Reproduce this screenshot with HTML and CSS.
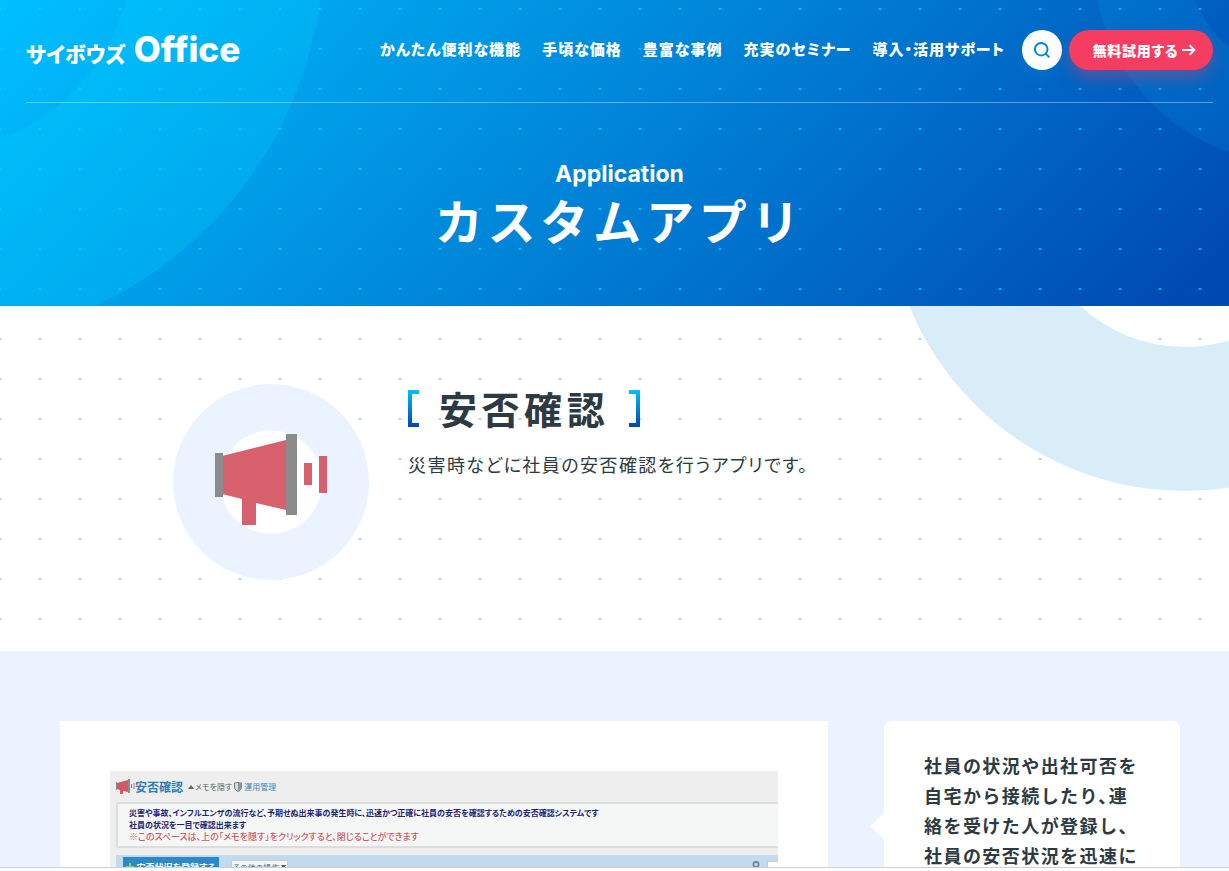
FILE: index.html
```html
<!DOCTYPE html>
<html lang="ja">
<head>
<meta charset="utf-8">
<meta name="viewport" content="width=device-width, initial-scale=1">
<title>安否確認 | カスタムアプリ | サイボウズ Office</title>
<link rel="stylesheet" href="styles.css">
</head>
<body>
<div class="page">
  <div class="hero">
    <header class="header">
      <a class="logo" href="#"><span class="logo-kana">サイボウズ</span><span class="logo-latin">Office</span></a>
      <nav class="nav">
        <a href="#">かんたん便利な機能</a>
        <a href="#">手頃な価格</a>
        <a href="#">豊富な事例</a>
        <a href="#">充実のセミナー</a>
        <a href="#">導入・活用サポート</a>
      </nav>
      <div class="actions">
        <button class="search" type="button" aria-label="検索">
          <svg width="18" height="18" viewBox="0 0 18 18" fill="none" stroke="#008ad8" stroke-width="2"><circle cx="8.2" cy="8.2" r="6.3"/><path d="M12.6 12.6 16.4 16.4"/></svg>
        </button>
        <a class="trial" href="#">無料試用する
          <svg width="14" height="12" viewBox="0 0 14 12" fill="none" stroke="#fff" stroke-width="2"><path d="M0 6H12M7.5 1.2 12.4 6 7.5 10.8"/></svg>
        </a>
      </div>
    </header>
    <div class="hero-title">
      <p class="hero-sub">Application</p>
      <h1>カスタムアプリ</h1>
    </div>
  </div>

  <main>
    <section class="intro">
      <div class="intro-icon">
        <svg width="112" height="92" viewBox="0 0 112 92">
          <path fill="#d6606c" d="M7 22 71 6V76L41 69V91H27V65L7 60Z"/>
          <path fill="#8a8c8b" d="M0 19H8V63H0ZM71 0H82V81H71Z"/>
          <path fill="#d6606c" d="M89 29H97V51H89ZM104 22H112V59H104Z"/>
        </svg>
      </div>
      <div class="intro-text">
        <h2>安否確認</h2>
        <p>災害時などに社員の安否確認を行うアプリです。</p>
      </div>
    </section>

    <section class="detail">
      <div class="shot-card">
        <div class="shot">
          <div class="shot-head">
            <svg width="19" height="16" viewBox="0 0 19 16"><path fill="#cf5964" d="M1 4 12 1V13L7 12V15H4V11L1 10Z"/><path fill="#8a8c8b" d="M0 3H1V11H0ZM12 0H14V14H12Z"/><path stroke="#d6606c" d="M15.5 5V9M18 4V10"/></svg>
            <strong>安否確認</strong>
            <svg class="tri" width="6" height="4" viewBox="0 0 6 4"><path fill="#666" d="M3 0 6 4H0Z"/></svg>
            <span>メモを隠す</span>
            <svg class="shield" width="8" height="10" viewBox="0 0 8 10"><path fill="#d5dade" stroke="#77808a" d="M.5 1 4 .5 7.5 1V5C7.5 8 5 9 4 9.5 3 9 .5 8 .5 5Z"/><path fill="#8b949c" d="M4 1 7 1.5V5C7 7 5 8.5 4 9Z"/></svg>
            <a href="#">運用管理</a>
          </div>
          <div class="memo">
            <p>災害や事故、インフルエンザの流行など、予期せぬ出来事の発生時に、迅速かつ正確に社員の安否を確認するための安否確認システムです</p>
            <p>社員の状況を一目で確認出来ます</p>
            <p class="memo-red">※このスペースは、上の「メモを隠す」をクリックすると、閉じることができます</p>
          </div>
          <div class="bar">
            <button class="register" type="button"><svg width="8" height="8" viewBox="0 0 8 8"><path stroke="#8bd45a" stroke-width="2" d="M4 0V8M0 4H8"/></svg>安否状況を登録する</button>
            <button class="other" type="button">その他の操作<svg width="5" height="4" viewBox="0 0 5 4"><path fill="#555" d="M0 0H5L2.5 4Z"/></svg></button>
            <svg class="lens" width="8" height="9" viewBox="0 0 8 9" fill="none" stroke="#68839a" stroke-width="1.6"><circle cx="4" cy="3.5" r="2.6"/><path d="M5 6 7 9"/></svg>
            <input class="find" type="text" aria-label="検索語">
          </div>
        </div>
      </div>
      <div class="bubble">
        <p>社員の状況や出社可否を<br>自宅から接続したり、連<br>絡を受けた人が登録し、<br>社員の安否状況を迅速に<br>確認できます。</p>
      </div>
    </section>
  </main>
</div>
<div class="bottom-bar"></div>
</body>
</html>
```
FILE: styles.css
```css
*, *::before, *::after { box-sizing: border-box; }

body {
  margin: 0;
  height: 100vh;
  display: flex;
  flex-direction: column;
  overflow: hidden;
  color: #2e3a42;
  background: #fff;
  font-family: "Noto Sans CJK JP", sans-serif;
}

h1, h2, p { margin: 0; }
a { color: inherit; text-decoration: none; }
button { font: inherit; border: 0; padding: 0; cursor: pointer; }
svg { display: block; flex: none; }

.page {
  flex: 1;
  min-height: 0;
  overflow-y: auto;
  scrollbar-width: none;
}

.bottom-bar {
  flex: none;
  height: 4px;
  border-top: 1px solid #ccd0d4;
  background: #fff;
}

/* Hero */
.hero {
  position: relative;
  isolation: isolate;
  overflow: hidden;
  padding: 0 16px 58px 26px;
  color: #fff;
  background:
    radial-gradient(2px 1px at 21px 20px, rgba(0, 225, 255, .6) 80%, transparent) 19px -11px / 40px 40px,
    linear-gradient(135deg, #00c0ff, #0046b0);
}

.hero::before,
.hero::after,
.intro::before {
  content: "";
  position: absolute;
  z-index: -1;
  border-radius: 50%;
}

.hero::before {
  left: -468px;
  top: -449px;
  width: 792px;
  height: 792px;
  border: 191px solid rgba(0, 210, 255, .26);
}

.hero::after {
  right: -272px;
  top: -244px;
  width: 408px;
  height: 408px;
  border: 94px solid rgba(0, 170, 235, .16);
}

.header {
  display: flex;
  align-items: center;
  height: 103px;
  padding-bottom: 3px;
  border-bottom: 1px solid rgba(255, 255, 255, .35);
}

.logo {
  display: flex;
  align-items: baseline;
  gap: 8px;
  padding-top: 2px;
  line-height: 38px;
}

.logo-kana {
  font-size: 21px;
  font-weight: 900;
  font-feature-settings: "palt";
}

.logo-latin {
  font-family: Inter, sans-serif;
  font-size: 35px;
  font-weight: 800;
}

.nav {
  display: flex;
  gap: 21px;
  margin-left: auto;
  padding-bottom: 2px;
  font-size: 15px;
  font-weight: 900;
  line-height: 24px;
  letter-spacing: 1px;
  font-feature-settings: "palt";
  white-space: nowrap;
}

.actions {
  display: flex;
  gap: 7px;
  margin-left: 17px;
}

.search {
  display: grid;
  place-items: center;
  width: 40px;
  height: 40px;
  border-radius: 50%;
  background: #fff;
  box-shadow: 0 8px 16px rgba(0, 130, 220, .3);
}

.trial {
  display: flex;
  align-items: center;
  justify-content: center;
  gap: 4px;
  width: 144px;
  height: 40px;
  padding-left: 7px;
  border-radius: 20px;
  background: #f43d61;
  box-shadow: 0 8px 16px rgba(244, 61, 97, .35);
  font-size: 14px;
  font-weight: 900;
  line-height: 20px;
  letter-spacing: .05em;
  font-feature-settings: "palt";
  white-space: nowrap;
}

.hero-title {
  padding-top: 55px;
  text-align: center;
}

.hero-sub {
  font-family: Inter, sans-serif;
  font-size: 23px;
  font-weight: 700;
  line-height: 32px;
}

.hero h1 {
  font-size: 48px;
  font-weight: 700;
  line-height: 58px;
  letter-spacing: .1em;
}

/* Intro */
.intro {
  position: relative;
  isolation: isolate;
  overflow: hidden;
  display: flex;
  gap: 39px;
  padding: 78px 173px 71px;
  background: radial-gradient(2px 1px at 21px 20px, rgba(60, 150, 225, .4) 80%, transparent) 19px 13px / 40px 40px;
}

.intro::before {
  right: -254px;
  top: -411px;
  width: 596px;
  height: 596px;
  border: 144px solid #d9edf9;
}

.intro-icon {
  flex: none;
  display: grid;
  place-items: center;
  width: 196px;
  height: 196px;
  padding-bottom: 4px;
  border-radius: 50%;
  background: radial-gradient(circle, #fff 51px, #eaf3ff 52px);
}

.intro-text h2 {
  display: flex;
  align-items: center;
  gap: 20px;
  width: max-content;
  font-size: 38px;
  font-weight: 700;
  line-height: 48px;
  letter-spacing: .12em;
}

.intro-text h2::before,
.intro-text h2::after {
  content: "";
  width: 11px;
  height: 37px;
  border: 0 solid;
  border-image: linear-gradient(#00bfff, #0046b0) 4;
}

.intro-text h2::before { border-width: 4px 0 4px 4px; }
.intro-text h2::after { border-width: 4px 4px 4px 0; }

.intro-text p {
  margin-top: 17px;
  font-size: 18px;
  line-height: 30px;
  letter-spacing: .08em;
  font-feature-settings: "palt";
}

/* Detail */
.detail {
  display: flex;
  align-items: flex-start;
  gap: 56px;
  padding: 70px 49px 70px 60px;
  background: #eaf3ff;
}

.shot-card {
  flex: 1;
  min-width: 0;
  padding: 50px;
  background: #fff;
}

.shot {
  height: 400px;
  overflow: hidden;
  padding-left: 6px;
  background: #eee;
  font-size: 9px;
  font-feature-settings: "palt";
}

.shot-head {
  display: flex;
  align-items: center;
  height: 31px;
  color: #666;
  font-size: 8px;
}

.shot-head strong {
  color: #2b7db5;
  font-size: 12px;
}

.shot-head .tri { margin: 0 1px 0 5px; }
.shot-head .shield { margin: 0 2px 0 2px; }
.shot-head a { color: #3b86b8; }

.memo {
  height: 46px;
  padding: 3px 0 0 11px;
  border: 2px solid #ddd;
  border-right: 0;
  border-radius: 3px 0 0 3px;
  background: #f5f7f6;
  color: #1d2475;
  font-size: 8px;
  font-weight: 700;
  line-height: 12px;
  white-space: nowrap;
}

.memo .memo-red {
  color: #cf5964;
  font-size: 9px;
  font-weight: 500;
}

.bar {
  display: flex;
  align-items: flex-start;
  height: 40px;
  margin-top: 7px;
  padding: 2px 0 0 7px;
  background: #c2daed;
}

.register {
  display: flex;
  align-items: center;
  justify-content: center;
  gap: 2px;
  width: 96px;
  height: 20px;
  background: #2a8ac8;
  color: #fff;
  font-size: 9px;
  font-weight: 700;
}

.other {
  display: flex;
  align-items: center;
  justify-content: center;
  gap: 2px;
  width: 57px;
  height: 14px;
  margin: 3px 0 0 12px;
  border: 1px solid #ccc;
  background: #f4f4f4;
  color: #24648f;
  font-size: 8px;
}

.lens { margin: 4px 7px 0 auto; }

.find {
  width: 11px;
  height: 16px;
  margin-top: 4px;
  padding: 0;
  border: 1px solid #ccc;
  border-right: 0;
  background: #fff;
}

.bubble {
  position: relative;
  flex: none;
  width: 296px;
  padding: 29px 40px 40px;
  border-radius: 8px;
  background: #fff;
  font-size: 18px;
  font-weight: 700;
  line-height: 30px;
  letter-spacing: .08em;
  font-feature-settings: "halt";
  white-space: nowrap;
}

.bubble::before {
  content: "";
  position: absolute;
  left: -14px;
  top: 92px;
  border: solid transparent;
  border-width: 13px 14px 13px 0;
  border-right-color: #fff;
}
```
